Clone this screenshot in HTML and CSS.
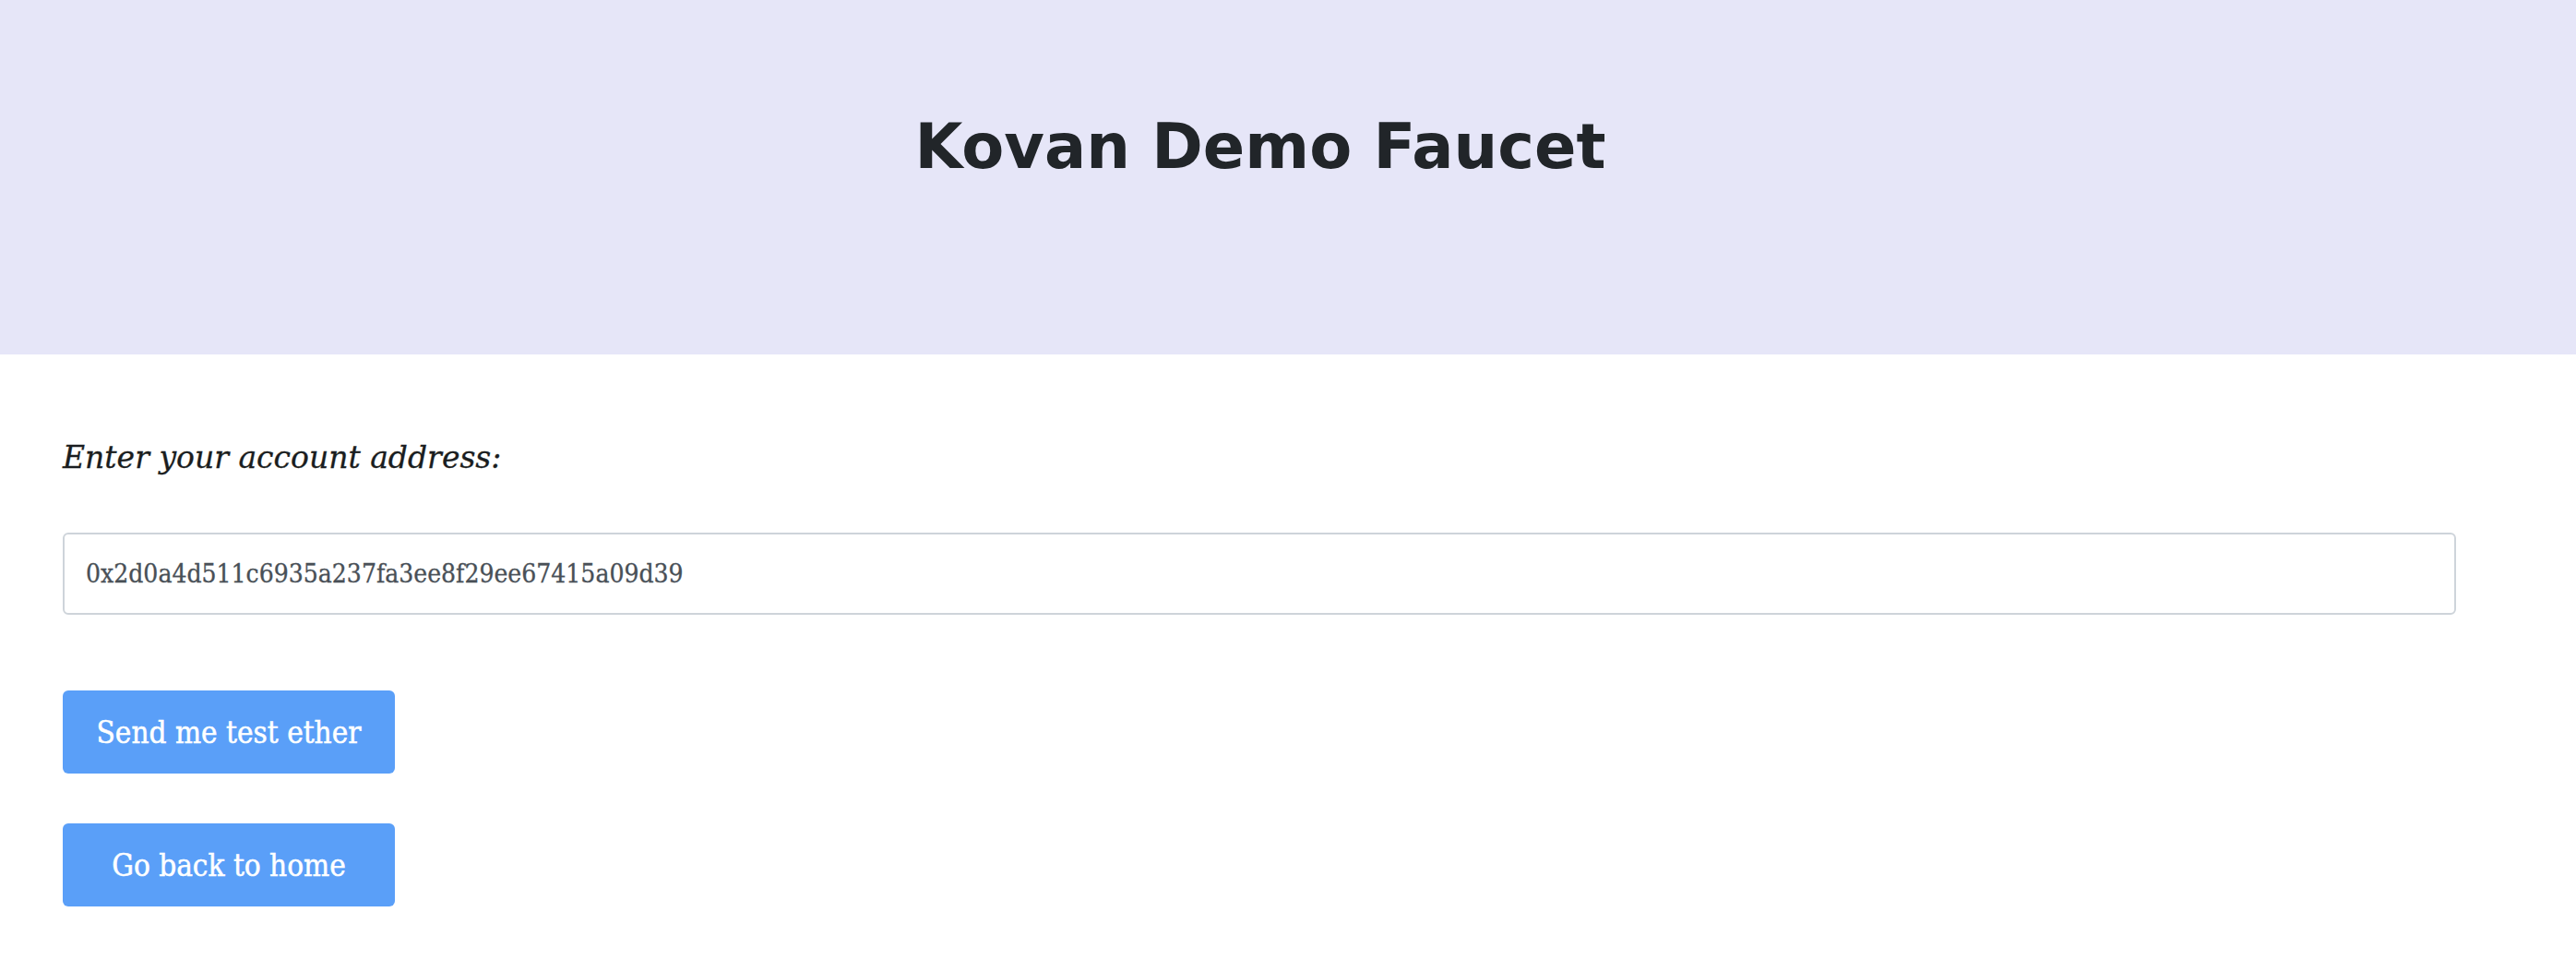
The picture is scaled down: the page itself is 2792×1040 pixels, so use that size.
FILE: index.html
```html
<!DOCTYPE html>
<html lang="en">
<head>
<meta charset="utf-8">
<title>Kovan Demo Faucet</title>
<link rel="stylesheet" href="styles.css">
</head>
<body>
<header class="hero">
  <h1 class="hero-title">Kovan Demo Faucet</h1>
</header>
<main class="content">
  <label class="field-label" for="address">Enter your account address:</label>
  <input class="field-input" id="address" type="text" value="0x2d0a4d511c6935a237fa3ee8f29ee67415a09d39">
  <div class="actions">
    <button class="btn" type="button">Send me test ether</button>
    <button class="btn" type="button">Go back to home</button>
  </div>
</main>
</body>
</html>
```

FILE: styles.css
```css
html, body {
  margin: 0;
  padding: 0;
  background: #ffffff;
}

.hero {
  box-sizing: border-box;
  height: 384px;
  padding-top: 119px;
  padding-right: 60px;
  background: #e6e6f8;
}

.hero-title {
  margin: 0;
  text-align: center;
  font-family: "DejaVu Sans", sans-serif;
  font-weight: 700;
  font-size: 67px;
  line-height: 80px;
  color: #212529;
}

.content {
  display: flex;
  flex-direction: column;
  align-items: flex-start;
  padding: 91px 130px 0 68px;
}

.field-label {
  font-family: "DejaVu Serif", serif;
  font-style: italic;
  font-size: 33px;
  line-height: 42px;
  color: #1a1d20;
  -webkit-text-stroke: 0.3px #1a1d20;
}

.field-input {
  box-sizing: border-box;
  width: 100%;
  height: 89px;
  margin-top: 60px;
  padding: 0 23px;
  border: 2px solid #ced4da;
  border-radius: 6px;
  font-family: "DejaVu Serif", serif;
  font-stretch: condensed;
  font-size: 28px;
  color: #495057;
  background: #ffffff;
  outline: none;
  -webkit-text-stroke: 0.3px #495057;
}

.actions {
  display: flex;
  flex-direction: column;
  gap: 54px;
  margin-top: 82px;
}

.btn {
  width: 360px;
  height: 90px;
  padding: 0;
  border: none;
  border-radius: 6px;
  background: #5a9ff8;
  color: #ffffff;
  font-family: "DejaVu Serif", serif;
  font-stretch: condensed;
  font-size: 33px;
  -webkit-text-stroke: 0.5px #ffffff;
  cursor: pointer;
}
```
